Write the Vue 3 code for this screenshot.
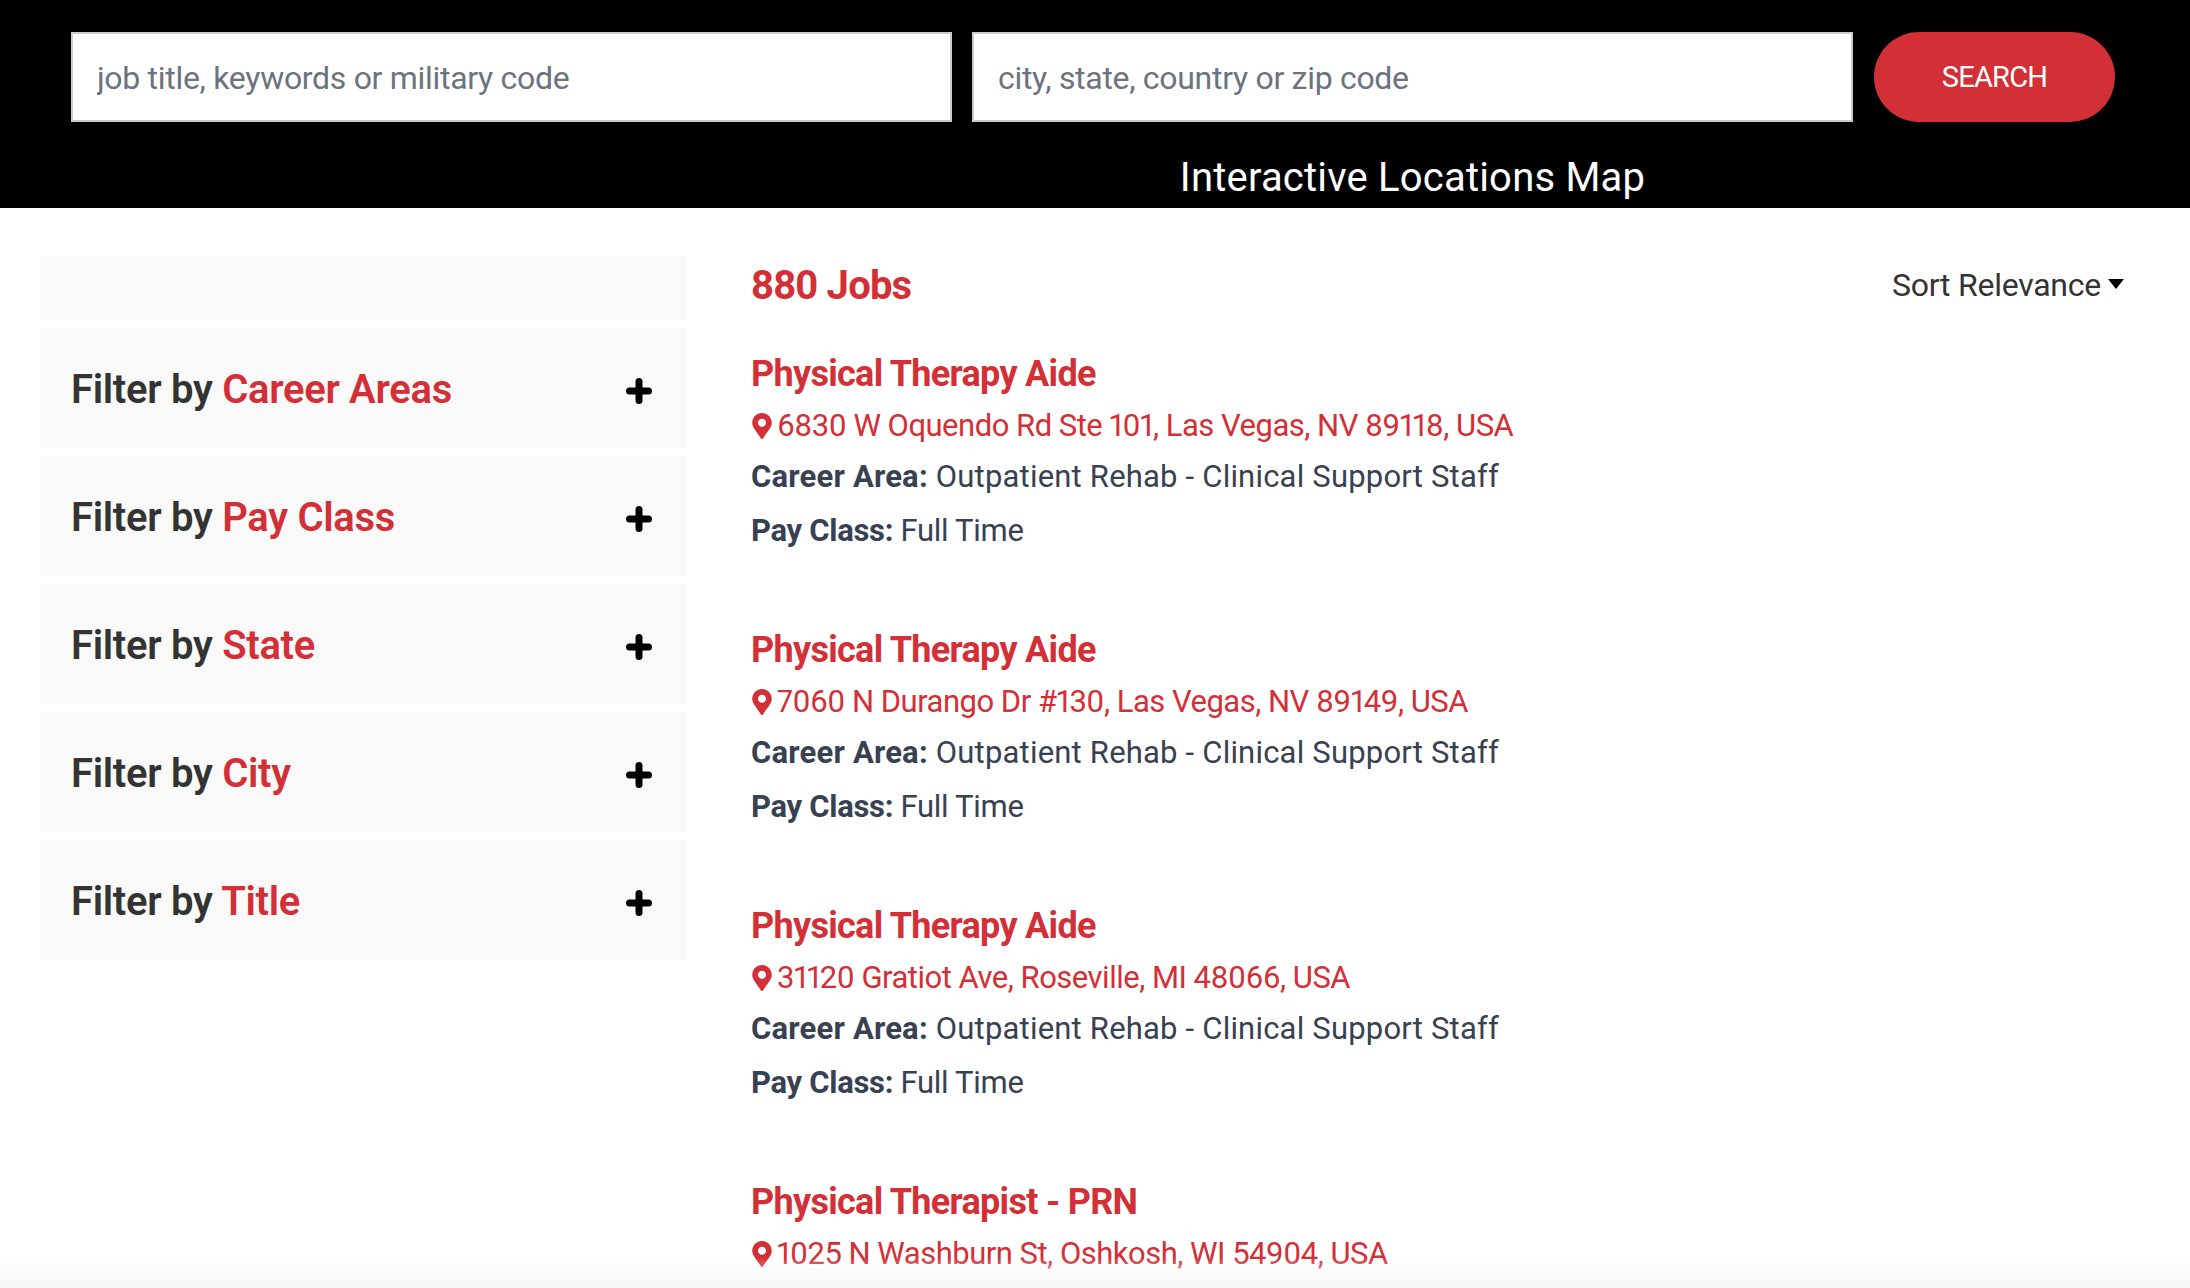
<template>
  <div class="page">
    <header class="top">
      <div class="top__form">
        <input class="top__input" type="text" placeholder="job title, keywords or military code" />
        <input class="top__input" type="text" placeholder="city, state, country or zip code" />
        <button class="top__btn" type="button">SEARCH</button>
      </div>
      <div class="top__links">
        <span></span>
        <a class="top__map">Interactive Locations Map</a>
      </div>
    </header>

    <main class="main">
      <aside class="filters">
        <div class="filters__blank"></div>
        <div class="filter" v-for="f in filters" :key="f">
          <h3 class="filter__title">Filter by <span class="red">{{ f }}</span></h3>
          <svg class="filter__plus" viewBox="0 0 26 26">
            <path d="M13 3.5v19M3.5 13h19" fill="none" stroke="#000" stroke-width="7" stroke-linecap="round" />
          </svg>
        </div>
      </aside>

      <section class="results">
        <div class="results__head">
          <h2 class="results__count">880 Jobs</h2>
          <div class="results__sort">Sort Relevance<i class="results__caret"></i></div>
        </div>

        <article class="job" v-for="(job, i) in jobs" :key="i">
          <h3 class="job__title">{{ job.title }}</h3>
          <div class="job__addr">
            <svg class="job__pin" viewBox="0 0 384 512">
              <path fill="#d32f37" d="M172.268 501.67C26.97 291.031 0 262.432 0 192 0 85.961 85.961 0 192 0s192 85.961 192 192c0 70.432-26.97 99.031-172.268 309.67-9.535 13.774-29.93 13.773-39.464 0zM192 272c44.183 0 80-35.817 80-80s-35.817-80-80-80-80 35.817-80 80 35.817 80 80 80z" />
            </svg>
            {{ job.address }}
          </div>
          <template v-if="job.area">
            <p class="job__line job__line--area"><b>Career Area:</b> {{ job.area }}</p>
            <p class="job__line"><b>Pay Class:</b> {{ job.pay }}</p>
          </template>
        </article>
      </section>
    </main>

    <div class="fade"></div>
  </div>
</template>

<script setup>
const filters = ['Career Areas', 'Pay Class', 'State', 'City', 'Title']

const area = 'Outpatient Rehab - Clinical Support Staff'

// у последней вакансии нижние строки уже за краем экрана
const jobs = [
  { title: 'Physical Therapy Aide', address: '6830 W Oquendo Rd Ste 101, Las Vegas, NV 89118, USA', area, pay: 'Full Time' },
  { title: 'Physical Therapy Aide', address: '7060 N Durango Dr #130, Las Vegas, NV 89149, USA', area, pay: 'Full Time' },
  { title: 'Physical Therapy Aide', address: '31120 Gratiot Ave, Roseville, MI 48066, USA', area, pay: 'Full Time' },
  { title: 'Physical Therapist - PRN', address: '1025 N Washburn St, Oshkosh, WI 54904, USA' }
]
</script>

<style>
html,
body {
  margin: 0;
  background: #fff;
}
</style>

<style scoped>
.page {
  position: relative;
  height: 1288px;
  overflow: hidden;
  font-family: Roboto, "Liberation Sans", sans-serif;
}

.red {
  color: #d32f37;
}

/* Шапка */
.top {
  height: 208px;
  box-sizing: border-box;
  padding: 32px 74px 0 71px;
  background: #000;
}

.top__form {
  display: grid;
  grid-template-columns: 881px 881px 242px;
  column-gap: 20px;
}

.top__input {
  height: 90px;
  box-sizing: border-box;
  padding: 2px 24px 0;
  border: 2px solid #ccc;
  border-radius: 0;
  outline: none;
  background: #fff;
  font-family: inherit;
  font-size: 32px;
  letter-spacing: -0.3px;
  min-width: 0;
}

.top__input::placeholder {
  color: #6b7280;
  opacity: 1;
}

.top__btn {
  height: 90px;
  margin-left: 1px;
  border: 0;
  border-radius: 45px;
  background: #d32f37;
  color: #fff;
  font-family: inherit;
  font-size: 29px;
  letter-spacing: -0.8px;
}

.top__links {
  display: grid;
  grid-template-columns: 881px 881px;
  column-gap: 20px;
  margin-top: 31px;
}

.top__map {
  color: #fff;
  font-size: 40px;
  line-height: 50px;
  text-align: center;
  letter-spacing: 0.2px;
}

/* Контент */
.main {
  display: grid;
  grid-template-columns: 647px 1373px;
  column-gap: 64px;
  padding: 48px 0 0 40px;
}

.filters {
  display: flex;
  flex-direction: column;
  gap: 8px;
}

.filters__blank {
  height: 64px;
  background: #f9f9f9;
}

.filter {
  height: 120px;
  display: flex;
  align-items: center;
  justify-content: space-between;
  padding: 0 35px 0 31px;
  box-sizing: border-box;
  background: #f9f9f9;
}

.filter__title {
  margin: 3px 0 0;
  color: #333;
  font-size: 40px;
  font-weight: 600;
  letter-spacing: -0.3px;
}

.filter__plus {
  width: 26px;
  height: 26px;
  margin-top: 5px;
}

.results__head {
  display: flex;
  justify-content: space-between;
  align-items: center;
  height: 58px;
  margin-bottom: 35px;
}

.results__count {
  margin: 0;
  color: #d32f37;
  font-size: 40px;
  font-weight: 700;
  letter-spacing: -0.8px;
}

.results__sort {
  display: flex;
  align-items: center;
  color: #333;
  font-size: 32px;
  letter-spacing: -0.25px;
}

.results__caret {
  width: 0;
  height: 0;
  margin-left: 7px;
  margin-top: -3px;
  border-top: 10px solid #000;
  border-left: 8.5px solid transparent;
  border-right: 8.5px solid transparent;
}

.job {
  height: 276px;
}

.job__title {
  margin: 0;
  color: #d32f37;
  font-size: 36px;
  line-height: 50px;
  font-weight: 700;
  letter-spacing: -0.7px;
}

.job__addr {
  display: flex;
  align-items: center;
  gap: 5px;
  margin-top: 2px;
  color: #d32f37;
  font-size: 31px;
  line-height: 50px;
  letter-spacing: -0.5px;
  font-variant-numeric: proportional-nums;
}

.job__pin {
  width: 20px;
  height: 26px;
  margin-left: 1px;
  flex: none;
}

.job__line {
  margin: 4px 0 0;
  color: #374151;
  font-size: 31px;
  line-height: 50px;
  letter-spacing: -0.3px;
}

.job__line--area {
  margin-top: 1px;
  letter-spacing: 0.2px;
}

.job__line b {
  font-weight: 700;
}

/* Затухание снизу */
.fade {
  position: absolute;
  left: 0;
  right: 0;
  bottom: 0;
  height: 30px;
  background: linear-gradient(to bottom, rgba(245, 245, 245, 0), #f6f6f6);
}
</style>
